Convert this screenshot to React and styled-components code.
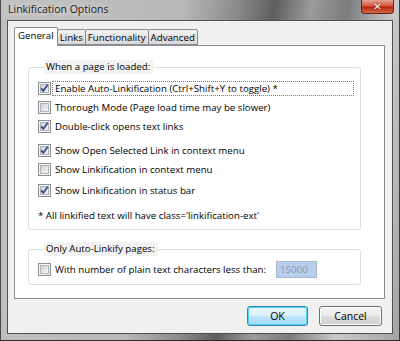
import React from 'react';
import styled, { createGlobalStyle } from 'styled-components';

const GlobalStyle = createGlobalStyle`
  html, body {
    margin: 0;
    padding: 0;
    background: #6b6b6b;
  }
  body {
    font-family: 'Open Sans', 'Noto Sans', sans-serif;
    font-size: 9.7px;
  }
`;

const Window = styled.div`
  width: 400px;
  height: 341px;
  box-sizing: border-box;
  display: flex;
  flex-direction: column;
  padding: 0 6px 6px 6px;
  background: linear-gradient(100deg, #c2c2c2 0%, #b8b8b8 40%, #8a8a8a 52%, #5f5f5f 60%, #9b9b9b 68%, #7c7c7c 76%, #c9c9c9 86%, #a4a4a4 100%);
  border-left: 1px solid #4a4a4a;
  border-right: 1px solid #3a3a3a;
  border-bottom: 1px solid #2a2a2a;
  overflow: hidden;
`;

const TitleBar = styled.div`
  height: 20px;
  display: flex;
  align-items: flex-start;
  justify-content: space-between;
`;

const Title = styled.span`
  font-size: 10.5px;
  line-height: 18px;
  color: #1c1c1c;
  padding-left: 1px;
  text-shadow: 0 0 6px rgba(255, 255, 255, 0.9);
`;

const CloseButton = styled.div`
  width: 33px;
  height: 14px;
  margin-right: -1px;
  box-sizing: border-box;
  border: 1px solid #6b1d14;
  border-top: none;
  border-radius: 0 0 4px 4px;
  background: linear-gradient(#e8a493 0%, #d2573f 45%, #b8260e 55%, #d46a4c 100%);
  display: flex;
  align-items: center;
  justify-content: center;
  color: #fff;
  font-family: 'DejaVu Sans', sans-serif;
  font-weight: bold;
  font-size: 10px;
  line-height: 1;
  text-shadow: 0 0 2px #5a1005;
`;

const Client = styled.div`
  flex: 1;
  display: flex;
  flex-direction: column;
  background: #f0f0f0;
  border: 1px solid #505050;
  padding: 6px 7px 0 6px;
`;

const TabRow = styled.div`
  display: flex;
  align-items: flex-end;
  height: 18px;
  position: relative;
  z-index: 1;
`;

const Tab = styled.div`
  box-sizing: border-box;
  height: ${(p) => (p.$active ? '19px' : '16px')};
  padding: 0 ${(p) => (p.$active ? '3px' : '2px')};
  margin-left: ${(p) => (p.$active ? '0' : '-1px')};
  margin-bottom: ${(p) => (p.$active ? '-1px' : '0')};
  border: 1px solid #898c95;
  border-bottom: ${(p) => (p.$active ? 'none' : '1px solid #898c95')};
  border-radius: 2px 2px 0 0;
  background: ${(p) => (p.$active ? '#fff' : 'linear-gradient(#f2f2f2, #e3e3e3 50%, #d9d9d9)')};
  line-height: 15px;
  color: #000;
  &:first-child {
    margin-left: 0;
  }
`;

const Panel = styled.div`
  height: 254px;
  box-sizing: border-box;
  background: #fff;
  border: 1px solid #898c95;
  padding: 14px 23px 0 13px;
`;

const Group = styled.fieldset`
  margin: 0 0 12px 0;
  padding: ${(p) => p.$pad};
  border: 1px solid #d5dfe5;
  border-radius: 3px;
  box-shadow: inset 1px 1px 0 #fff;
`;

const Legend = styled.legend`
  color: #000;
  padding: 0 3px 0 2px;
  margin-left: 6px;
  line-height: 14px;
  background: #f2f2f2;
`;

const Row = styled.label`
  display: flex;
  align-items: center;
  height: 19px;
  margin-top: ${(p) => p.$gap || 0}px;
  color: #000;
  white-space: nowrap;
`;

const RowText = styled.span`
  flex: ${(p) => (p.$fit ? 'none' : '1')};
  box-sizing: border-box;
  height: 15px;
  line-height: 13px;
  padding: 0 2px;
  margin-left: 1px;
  margin-right: ${(p) => (p.$focus ? '6px' : '0')};
  border: 1px dotted ${(p) => (p.$focus ? '#7a7a7a' : 'transparent')};
`;

const Note = styled.div`
  color: #000;
  height: 19px;
  line-height: 19px;
  margin-top: 6px;
  white-space: nowrap;
`;

const NumberBox = styled.div`
  width: 41px;
  height: 17px;
  box-sizing: border-box;
  margin-left: 7px;
  border: 1px solid #a9b8cf;
  background: #b7cfec;
  color: #8a96a8;
  line-height: 15px;
  padding-left: 3px;
`;

const Footer = styled.div`
  display: flex;
  justify-content: flex-end;
  gap: 11px;
  padding: 7px 3px 0 0;
`;

const Button = styled.div`
  box-sizing: border-box;
  width: ${(p) => p.$w}px;
  height: 20px;
  border: 1px solid ${(p) => (p.$default ? '#3c7fb1' : '#707070')};
  border-radius: 3px;
  background: ${(p) =>
    p.$default
      ? 'linear-gradient(#eaf6fd 0%, #d9f0fc 50%, #bee6fd 51%, #a7d9f5 100%)'
      : 'linear-gradient(#f2f2f2 0%, #ebebeb 50%, #dddddd 51%, #cfcfcf 100%)'};
  box-shadow: inset 0 0 0 1px ${(p) => (p.$default ? '#48d4f8' : '#fcfcfc')};
  display: flex;
  align-items: center;
  justify-content: center;
  font-size: 10.5px;
  color: #000;
`;

const CheckBox = ({ checked }) => (
  <svg width="13" height="13" viewBox="0 0 13 13" style={{ flex: 'none' }}>
    <defs>
      <linearGradient id="cbg" x1="0" y1="0" x2="1" y2="1">
        <stop offset="0" stopColor="#cbcfd5" />
        <stop offset="1" stopColor="#f6f6f6" />
      </linearGradient>
    </defs>
    <rect x="0.5" y="0.5" width="12" height="12" fill="#f4f4f4" stroke="#8e8f8f" />
    <rect x="2.5" y="2.5" width="8" height="8" fill="url(#cbg)" stroke="#aeb3b9" strokeWidth="1" />
    {checked && (
      <path d="M3.2 6.4 L5.3 8.8 L9.8 2.8" fill="none" stroke="#34448c" strokeWidth="1.7" />
    )}
  </svg>
);

const Option = ({ checked, focus, gap, children }) => (
  <Row $gap={gap}>
    <CheckBox checked={checked} />
    <RowText $focus={focus}>{children}</RowText>
  </Row>
);

export default function App() {
  return (
    <>
      <GlobalStyle />
      <Window>
        <TitleBar>
          <Title>Linkification Options</Title>
          <CloseButton>✕</CloseButton>
        </TitleBar>
        <Client>
          <TabRow>
            <Tab $active>General</Tab>
            <Tab>Links</Tab>
            <Tab>Functionality</Tab>
            <Tab>Advanced</Tab>
          </TabRow>
          <Panel>
            <Group $pad="5px 0 4px 9px">
              <Legend>When a page is loaded:</Legend>
              <Option checked focus>Enable Auto-Linkification (Ctrl+Shift+Y to toggle) *</Option>
              <Option>Thorough Mode (Page load time may be slower)</Option>
              <Option checked>Double-click opens text links</Option>
              <Option checked gap={5}>Show Open Selected Link in context menu</Option>
              <Option>Show Linkification in context menu</Option>
              <Option checked gap={2}>Show Linkification in status bar</Option>
              <Note>* All linkified text will have class='linkification-ext'</Note>
            </Group>
            <Group $pad="4px 0 5px 9px">
              <Legend>Only Auto-Linkify pages:</Legend>
              <Row>
                <CheckBox />
                <RowText $fit>With number of plain text characters less than:</RowText>
                <NumberBox>15000</NumberBox>
              </Row>
            </Group>
          </Panel>
          <Footer>
            <Button $w={61} $default>OK</Button>
            <Button $w={63}>Cancel</Button>
          </Footer>
        </Client>
      </Window>
    </>
  );
}
